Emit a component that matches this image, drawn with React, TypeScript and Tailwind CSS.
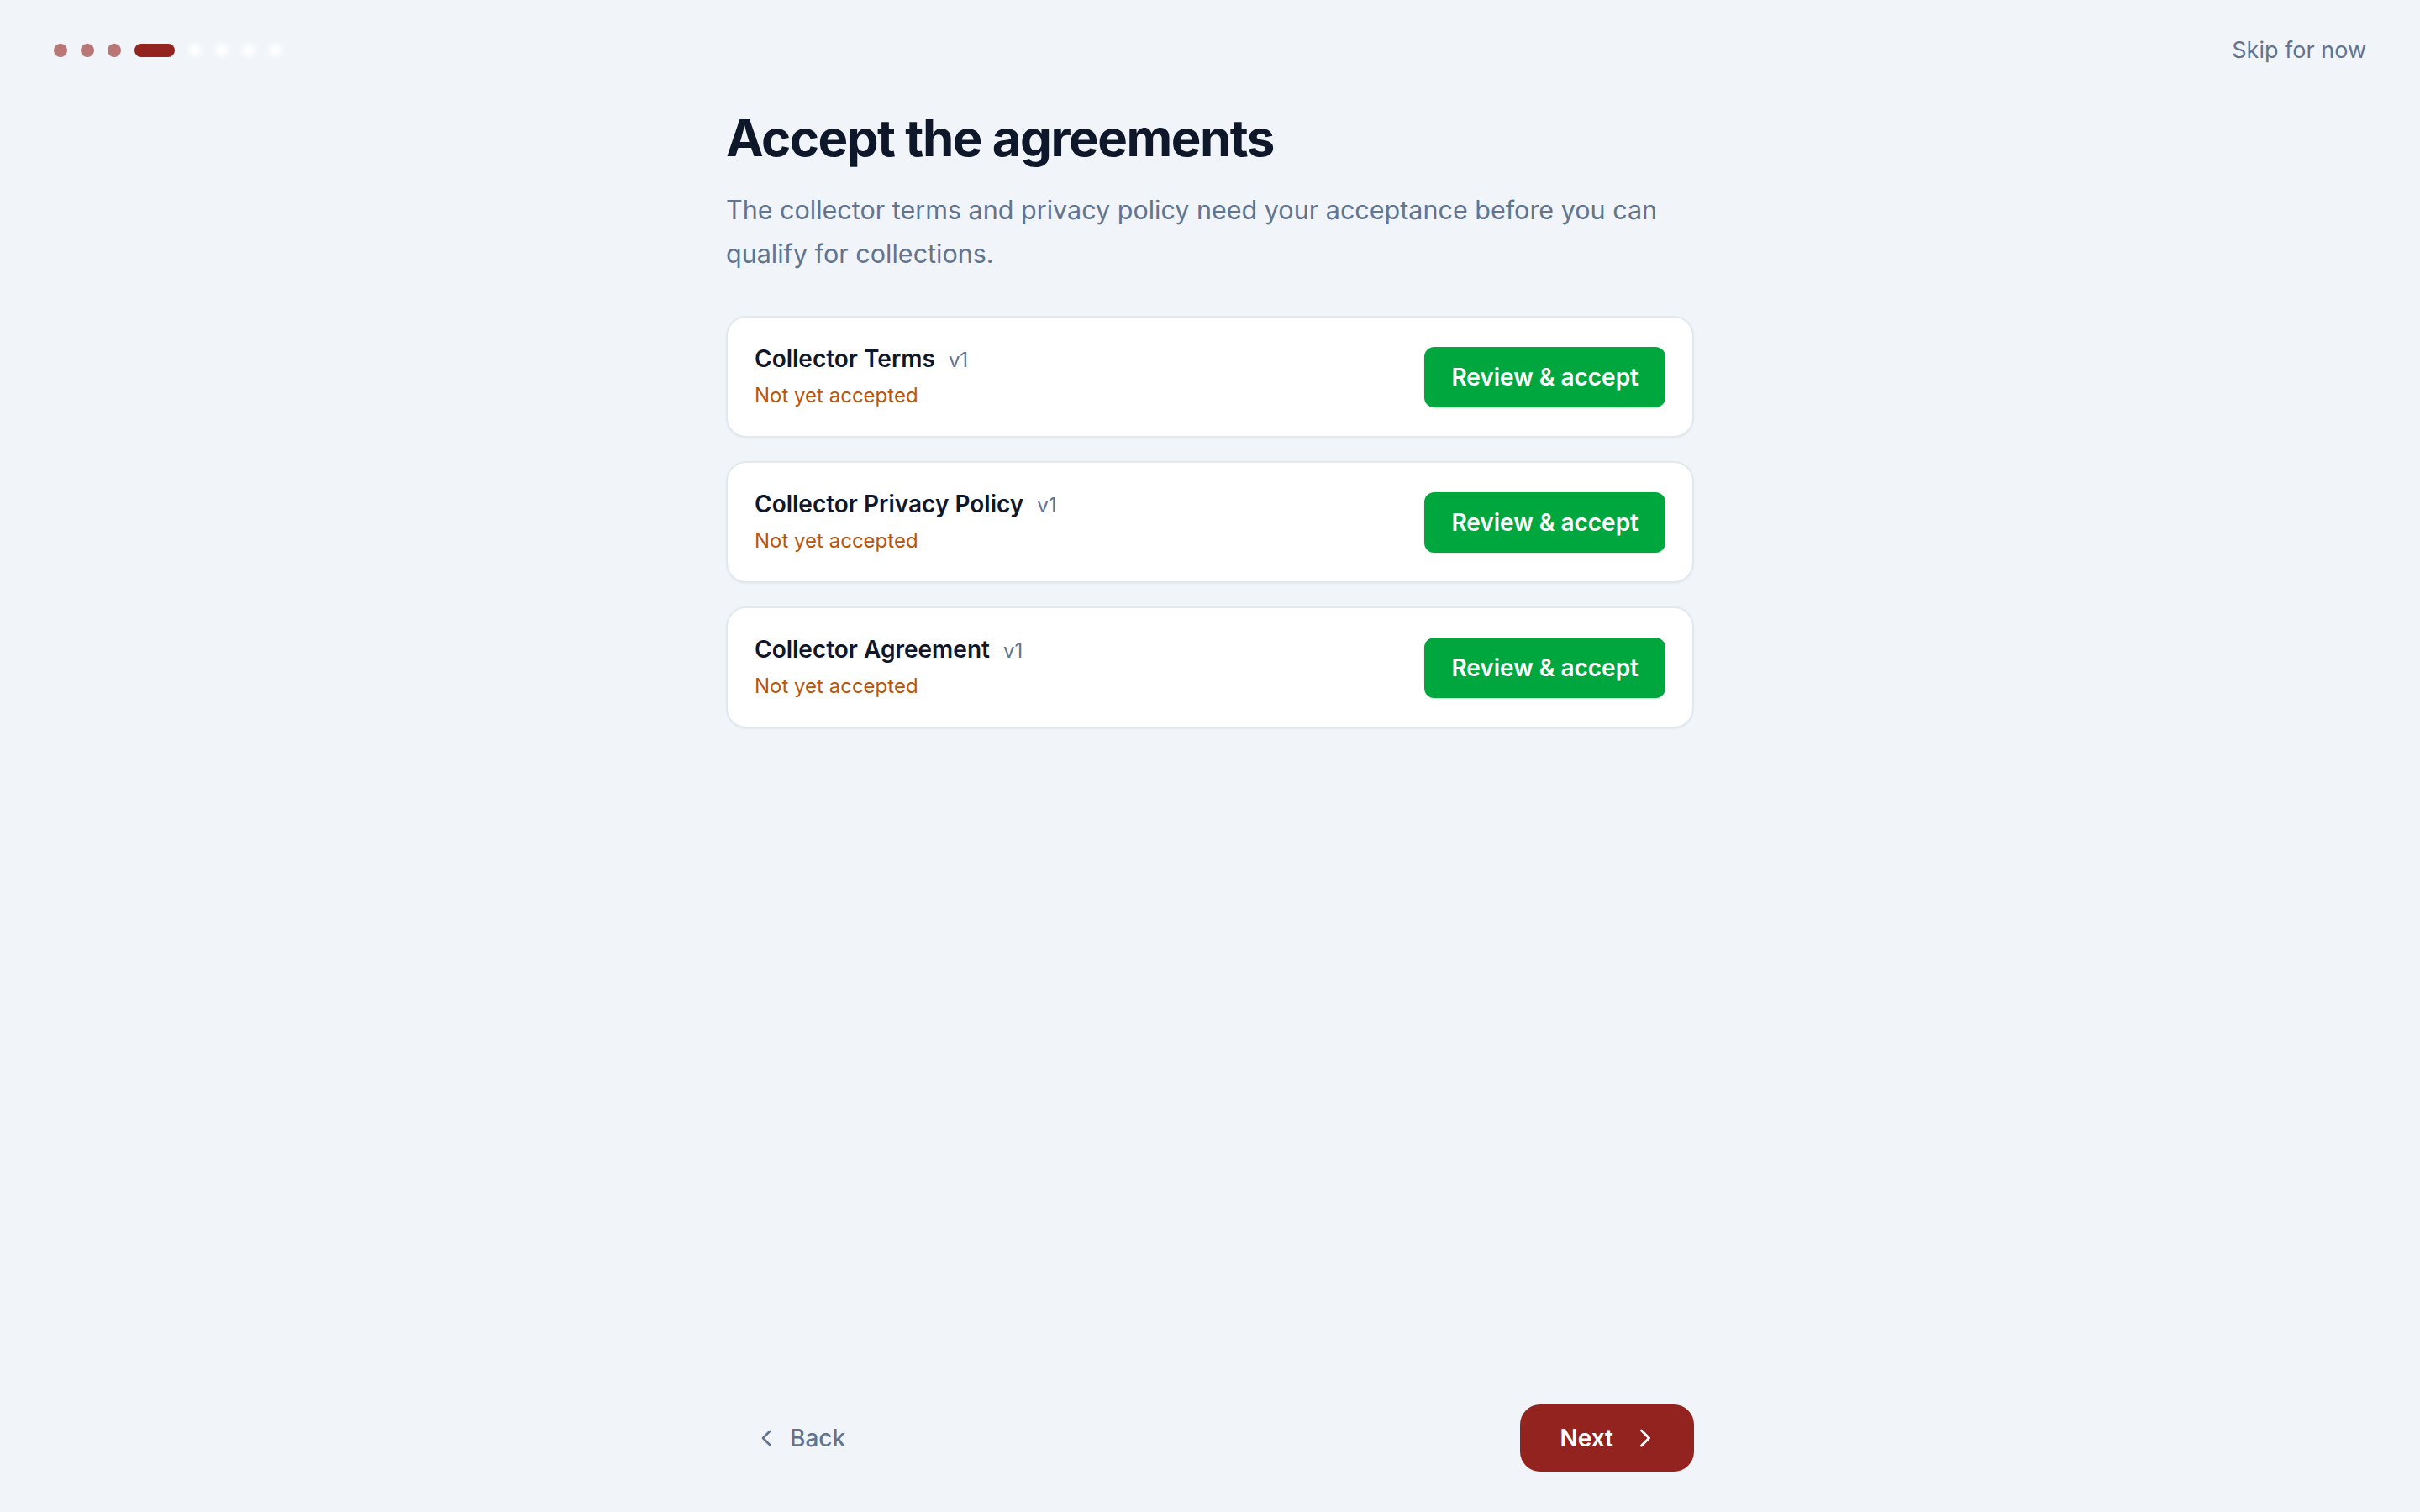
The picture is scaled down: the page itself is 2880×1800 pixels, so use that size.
import React from 'react';
import { ChevronLeft, ChevronRight } from 'lucide-react';

const agreements = [
  { name: 'Collector Terms', version: 'v1' },
  { name: 'Collector Privacy Policy', version: 'v1' },
  { name: 'Collector Agreement', version: 'v1' },
];

const steps = ['done', 'done', 'done', 'current', 'todo', 'todo', 'todo', 'todo'];

const App = () => {
  return (
    <div
      className="min-h-screen flex flex-col bg-[#f1f5f9] text-[#0f172b]"
      style={{ fontFamily: 'Inter, "Noto Sans", sans-serif' }}
    >
      {/* Progress + skip */}
      <header className="flex items-center justify-between px-16 pt-10">
        <div className="flex items-center gap-4 h-10">
          {steps.map((s, i) =>
            s === 'done' ? (
              <span key={i} className="h-4 w-4 rounded-full bg-[#b87776]" />
            ) : s === 'current' ? (
              <span key={i} className="h-4 w-12 rounded-full bg-[#92231e]" />
            ) : (
              <span key={i} className="h-4 w-4 rounded-full bg-white/90 blur-[3px]" />
            )
          )}
        </div>
        <button className="text-[27px] leading-10 text-[#62748e]">Skip for now</button>
      </header>

      <main className="flex-1 w-full max-w-[1152px] mx-auto mt-12">
        <h1 className="text-6xl leading-[72px] font-bold tracking-tight text-[#0f172b]">
          Accept the agreements
        </h1>
        <p className="mt-6 text-[30.5px] leading-[52px] text-[#62748e]">
          The collector terms and privacy policy need your acceptance before you can qualify for
          collections.
        </p>

        <div className="mt-12 flex flex-col gap-7">
          {agreements.map((a) => (
            <div
              key={a.name}
              className="flex items-center justify-between rounded-3xl border-2 border-[#e2e8f0] bg-white p-8 shadow-xs"
            >
              <div>
                <div className="flex items-baseline gap-4">
                  <span className="text-[28px] leading-[34px] font-semibold text-[#0f172b]">{a.name}</span>
                  <span className="text-2xl text-[#62748e]">{a.version}</span>
                </div>
                <div className="mt-2.5 text-2xl leading-8 text-[#b9560c]">Not yet accepted</div>
              </div>
              <button className="rounded-xl bg-[#00a63e] px-8 py-4 text-[28px] leading-10 font-semibold text-white shadow-sm">
                Review &amp; accept
              </button>
            </div>
          ))}
        </div>
      </main>

      {/* Footer nav */}
      <footer className="w-full max-w-[1152px] mx-auto flex items-center justify-between pb-12">
        <button className="flex items-center gap-3 px-8 py-5 text-[28px] leading-10 font-medium text-[#62748e]">
          <ChevronLeft className="h-8 w-8" strokeWidth={2} />
          Back
        </button>
        <button className="flex items-center gap-5 rounded-3xl bg-[#92231e] pl-12 pr-10 py-5 text-[28px] leading-10 font-semibold text-white">
          Next
          <ChevronRight className="h-9 w-9" strokeWidth={2} />
        </button>
      </footer>
    </div>
  );
};

export default App;
